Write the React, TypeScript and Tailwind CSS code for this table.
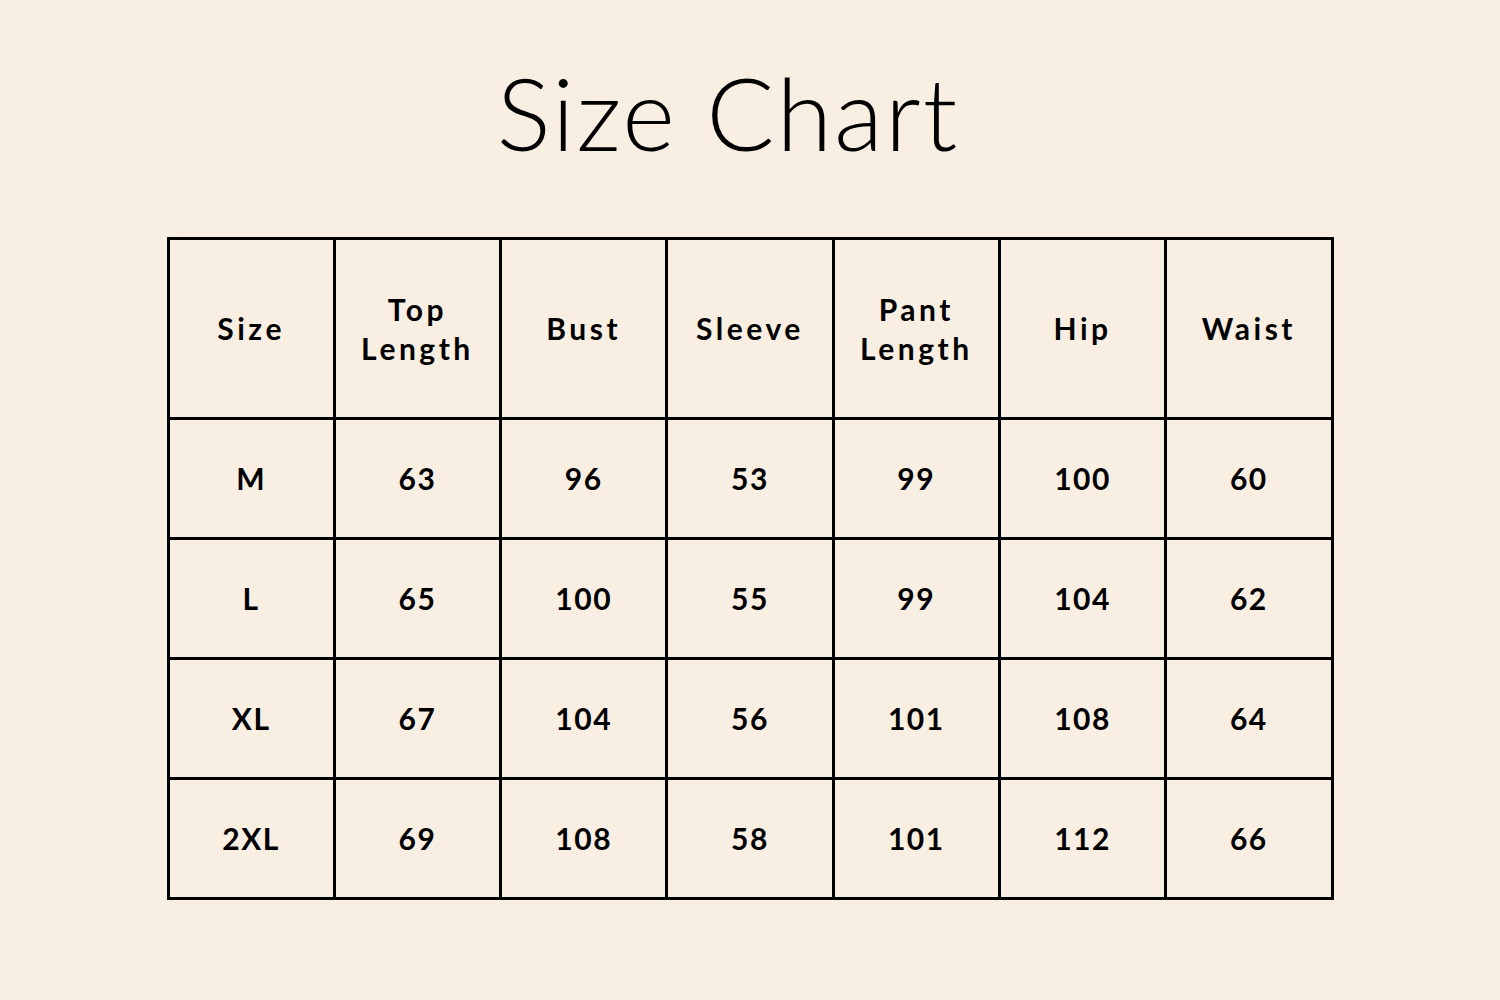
const headers = [['Size'], ['Top', 'Length'], ['Bust'], ['Sleeve'], ['Pant', 'Length'], ['Hip'], ['Waist']];

const rows = [
  ['M', '63', '96', '53', '99', '100', '60'],
  ['L', '65', '100', '55', '99', '104', '62'],
  ['XL', '67', '104', '56', '101', '108', '64'],
  ['2XL', '69', '108', '58', '101', '112', '66'],
];

export default function App() {
  return (
    <div className="w-[1500px] h-[1000px] bg-[#f8efe2] text-black font-['Lato','Open_Sans',sans-serif]">
      <h1 className="pt-[58px] pr-[44px] text-center text-[101px] leading-[108px] font-light tracking-[2px]">Size Chart</h1>
      <div className="flex justify-center pt-[71px]">
        <table className="border-collapse table-fixed w-[1167px]">
          <thead>
            <tr className="h-[180px]">
              {headers.map((h, i) => (
                <th key={i} className="border-[3px] border-black text-[30px] leading-[39px] font-bold tracking-[3.5px] text-center align-middle">
                  {h.map((l, j) => <div key={j}>{l}</div>)}
                </th>
              ))}
            </tr>
          </thead>
          <tbody>
            {rows.map((r, i) => (
              <tr key={i} className="h-[120px]">
                {r.map((c, j) => (
                  <td key={j} className="border-[3px] border-black text-[30px] font-bold tracking-[1.5px] text-center align-middle">{c}</td>
                ))}
              </tr>
            ))}
          </tbody>
        </table>
      </div>
    </div>
  );
}
